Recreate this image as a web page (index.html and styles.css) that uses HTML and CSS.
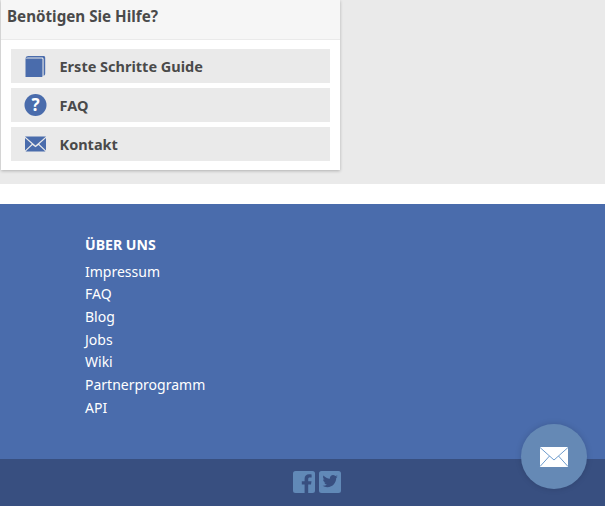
FILE: index.html
```html
<!DOCTYPE html>
<html lang="de">
<head>
    <meta charset="UTF-8">
    <title>Hilfe</title>
    <link rel="stylesheet" href="styles.css">
</head>
<body>

    <!-- Grey content area with the help card -->
    <div class="content">
        <div class="help-card">
            <div class="help-title">Benötigen Sie Hilfe?</div>
            <div class="help-list">
                <a class="help-item" href="#">
                    <svg class="help-icon" width="24" height="22" viewBox="0 0 24 22">
                        <path d="M1.500 3.600V22H17.500c.6 0 1-.4 1-1V4.600c0-.6-.4-1-1-1z" fill="#4a6cac"/>
                        <path d="M1.500 3.500C1.800 1.800 2.800 1 4.300 1H19.500c1 0 1.700.7 1.700 1.700V18.500c0 1.200-.6 2-1.600 2.300V4.200c0-1.100-.7-1.600-1.600-1.600H4.100C3.100 2.600 2.100 2.900 1.500 3.500z" fill="#4a6cac"/>
                    </svg>
                    <span>Erste Schritte Guide</span>
                </a>
                <a class="help-item" href="#">
                    <svg class="help-icon" width="24" height="22" viewBox="0 0 24 22">
                        <circle cx="11.500" cy="11" r="11" fill="#4a6cac"/>
                        <text x="11.500" y="17" class="q-mark">?</text>
                    </svg>
                    <span>FAQ</span>
                </a>
                <a class="help-item" href="#">
                    <svg class="help-icon" width="24" height="22" viewBox="0 0 24 22">
                        <path d="M1 3.500H22L11.500 12.500z" fill="#4a6cac"/>
                        <path d="M1 5V17.500L7.800 10.900zM22 5V17.500L15.200 10.900z" fill="#4a6cac"/>
                        <path d="M1.500 18.500H21.500L14.500 11.900 11.500 14.300 8.500 11.900z" fill="#4a6cac"/>
                    </svg>
                    <span>Kontakt</span>
                </a>
            </div>
        </div>
    </div>

    <div class="gap"></div>

    <footer>
        <div class="footer-main">
            <h4>ÜBER UNS</h4>
            <ul class="footer-links">
                <li><a href="#">Impressum</a></li>
                <li><a href="#">FAQ</a></li>
                <li><a href="#">Blog</a></li>
                <li><a href="#">Jobs</a></li>
                <li><a href="#">Wiki</a></li>
                <li><a href="#">Partnerprogramm</a></li>
                <li><a href="#">API</a></li>
            </ul>
        </div>
        <div class="footer-bottom">
            <svg class="social" width="22" height="22" viewBox="0 0 22 22">
                <path d="M2.500 0H19.500A2.500 2.500 0 0 1 22 2.500V19.500A2.500 2.500 0 0 1 19.500 22H15.200V13.600H18L18.500 10.200H15.200V8.200C15.200 7.200 15.600 6.600 16.800 6.600H18.600V3.500C18 3.400 17 3.300 16 3.300 13.400 3.300 11.600 4.900 11.600 7.800V10.200H8.800V13.600H11.600V22H2.500A2.500 2.500 0 0 1 0 19.500V2.500A2.500 2.500 0 0 1 2.500 0z" fill="#6189b7"/>
            </svg>
            <svg class="social" width="22" height="22" viewBox="0 0 22 22">
                <path fill-rule="evenodd" d="M2.500 0H19.500A2.500 2.500 0 0 1 22 2.500V19.500A2.500 2.500 0 0 1 19.500 22H2.500A2.500 2.500 0 0 1 0 19.500V2.500A2.500 2.500 0 0 1 2.500 0zM18.800 5.400C18.200 5.700 17.600 5.900 17 6 17.700 5.600 18.200 5 18.400 4.200 17.800 4.600 17.100 4.900 16.300 5 15.700 4.400 14.900 4 14 4 12.300 4 10.900 5.400 10.900 7.100 10.900 7.400 10.900 7.600 11 7.800 8.400 7.700 6.100 6.400 4.500 4.500 4.200 5 4.100 5.500 4.100 6.100 4.100 7.200 4.600 8.100 5.500 8.700 5 8.700 4.500 8.500 4.100 8.300V8.400C4.100 9.900 5.200 11.100 6.600 11.400 6.100 11.500 5.600 11.500 5.200 11.400 5.600 12.600 6.700 13.500 8.100 13.500 6.700 14.500 5.100 15 3.500 14.800 4.900 15.700 6.500 16.200 8.300 16.200 14 16.200 17.200 11.400 17.200 7.300V6.900C17.800 6.500 18.400 6 18.800 5.400z" fill="#6189b7"/>
            </svg>
        </div>
    </footer>

    <!-- Floating contact button -->
    <a class="chat-button" href="#">
        <svg width="30" height="22" viewBox="0 0 30 22">
            <rect x="1" y="1" width="28" height="20" fill="#fff"/>
            <path d="M1 1.500L15 14 29 1.500M1 20.500L10.500 10M29 20.500L19.500 10" fill="none" stroke="#6e9ccd" stroke-width="1"/>
        </svg>
    </a>

</body>
</html>
```
FILE: styles.css
```css
html, body {
    margin: 0;
    padding: 0;
}

body {
    font-family: "Noto Sans", sans-serif;
    background-color: #fff;
    color: #4a4a4a;
    height: 506px;
    overflow: hidden;
}

a {
    color: inherit;
    text-decoration: none;
}

.content {
    height: 184px;
    background-color: #eaeaea;
    padding-left: 1px;
    box-sizing: border-box;
}

.help-card {
    width: 339px;
    height: 170px;
    background-color: #fff;
    box-shadow: 0 1px 3px rgba(0, 0, 0, 0.25);
}

.help-title {
    height: 40px;
    padding: 6px 0 0 6px;
    box-sizing: border-box;
    background-color: #f6f6f6;
    border-bottom: 1px solid #eaeaea;
    font-size: 15.200px;
    font-weight: 700;
    line-height: 20px;
}

.help-list {
    display: flex;
    flex-direction: column;
    gap: 5px;
    padding: 9px 10px 0;
}

.help-item {
    display: flex;
    align-items: center;
    height: 34px;
    background-color: #eaeaea;
    padding-left: 13px;
    font-size: 14.500px;
    font-weight: 700;
}

.help-icon {
    margin-right: 11.500px;
    flex: none;
}

.q-mark {
    fill: #fff;
    font-family: "Noto Sans", sans-serif;
    font-size: 17px;
    font-weight: 700;
    text-anchor: middle;
}

.gap {
    height: 20px;
}

footer {
    background-color: #4a6cac;
    height: 302px;
    display: flex;
    flex-direction: column;
    color: #fff;
}

.footer-main {
    flex: 1;
    padding: 31px 0 0 85px;
}

.footer-main h4 {
    margin: 0 0 5.600px 0;
    font-size: 14.100px;
    line-height: 20px;
    font-weight: 700;
}

.footer-links {
    list-style: none;
    margin: 0;
    padding: 0;
    font-size: 14px;
    line-height: 22.670px;
}

.footer-bottom {
    height: 47px;
    background-color: #384f80;
    display: flex;
    justify-content: center;
    gap: 4px;
    padding: 12px 0 0 29px;
    box-sizing: border-box;
}

.social {
    display: block;
}

.chat-button {
    position: fixed;
    left: 521px;
    top: 424px;
    width: 66px;
    height: 65px;
    border-radius: 50%;
    background-color: #6589b5;
    box-shadow: 0 0 6px rgba(0, 0, 0, 0.15);
    display: flex;
    align-items: center;
    justify-content: center;
}
```
